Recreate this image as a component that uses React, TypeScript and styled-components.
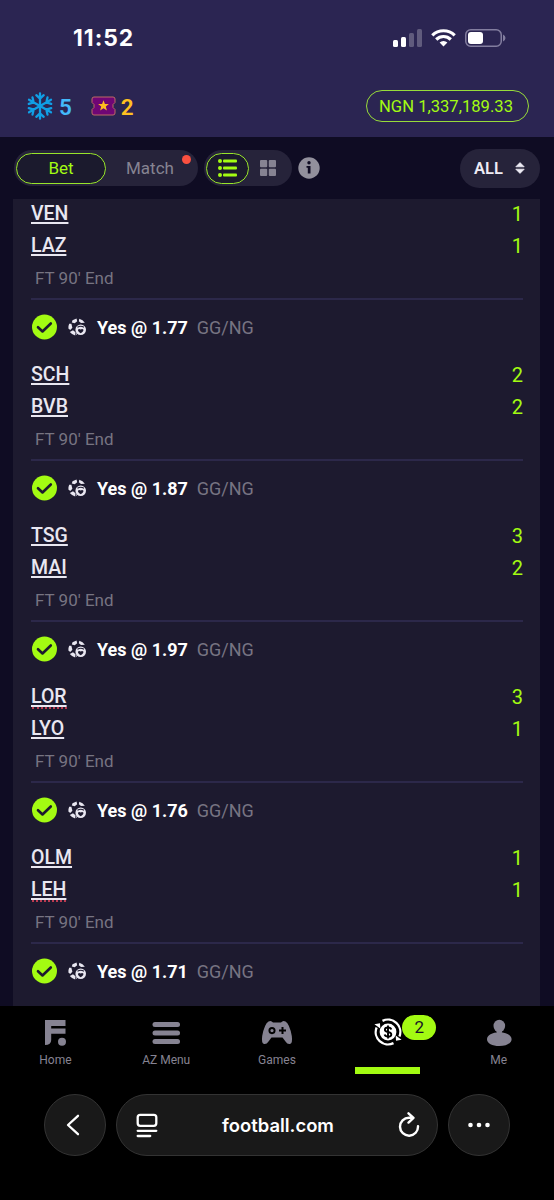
import React from "react";
import styled, { createGlobalStyle } from "styled-components";

const LIME = "#a3fb12";
const GREY = "#868392";

const GlobalStyle = createGlobalStyle`
  * { box-sizing: border-box; }
  body { margin: 0; background: #000; font-family: Roboto, "Liberation Sans", sans-serif; }
  svg { display: block; flex: none; }
`;

const Screen = styled.div`
  width: 554px;
  height: 1200px;
  display: flex;
  flex-direction: column;
  background: #0f0c23;
  overflow: hidden;
`;

const Header = styled.header`
  flex: none;
  height: 137px;
  background: #2b2552;
`;

const StatusBar = styled.div`
  height: 75px;
  display: flex;
  align-items: center;
  justify-content: space-between;
  padding: 0 48px 0 73px;
`;

const Clock = styled.span`
  font: 700 22.8px/26px Inter, sans-serif;
  letter-spacing: 1px;
  color: #fff;
`;

const StatusIcons = styled.div`
  display: flex;
  align-items: center;
  gap: 9px;
`;

const AccountRow = styled.div`
  height: 62px;
  display: flex;
  align-items: center;
  padding: 0 25px 0 26px;
`;

const Count = styled.span<{ $color: string; $gap: number }>`
  font-size: 22.5px;
  line-height: 28px;
  font-weight: 600;
  color: ${(p) => p.$color};
  margin: 1px ${(p) => p.$gap}px 0 5px;
`;

const Balance = styled.div`
  margin-left: auto;
  width: 163px;
  height: 32px;
  display: flex;
  align-items: center;
  justify-content: center;
  padding-right: 3px;
  border: 1.5px solid #98dc3a;
  border-radius: 16px;
  color: ${LIME};
  font-size: 16.6px;
  white-space: nowrap;
`;

const Toolbar = styled.div`
  flex: none;
  height: 62px;
  display: flex;
  align-items: center;
  padding: 0 14px;
`;

const Segment = styled.div<{ $width: number }>`
  width: ${(p) => p.$width}px;
  height: 36px;
  display: flex;
  align-items: center;
  padding-left: 2px;
  border-radius: 18px;
  background: #26233a;
  margin-right: 6px;
  position: relative;
`;

const SegmentItem = styled.div<{ $active?: boolean; $width: number }>`
  width: ${(p) => p.$width}px;
  height: 31px;
  display: flex;
  align-items: center;
  justify-content: center;
  border-radius: 16px;
  border: 1.5px solid ${(p) => (p.$active ? "#98e52a" : "transparent")};
  background: ${(p) => (p.$active ? "#1b1a2d" : "transparent")};
  color: ${(p) => (p.$active ? LIME : GREY)};
  font-size: 17px;
`;

const Dot = styled.i`
  position: absolute;
  right: 7px;
  top: 5px;
  width: 9px;
  height: 9px;
  border-radius: 50%;
  background: #fa5040;
`;

const Filter = styled.div`
  margin-left: auto;
  width: 80px;
  height: 39px;
  display: flex;
  align-items: center;
  gap: 12px;
  padding-left: 14px;
  border-radius: 20px;
  background: #26233a;
  color: #eeecf5;
  font-size: 16.5px;
  font-weight: 600;
`;

const Ticket = styled.main`
  flex: none;
  height: 807px;
  margin: 0 14px 0 13px;
  padding: 0 17px 0 18px;
  background: #1d1a2f;
  overflow: hidden;
`;

const Matches = styled.div`
  margin-top: -1px;
`;

const Match = styled.section`
  height: 161px;
`;

const TeamRow = styled.div`
  height: 32px;
  display: flex;
  align-items: center;
  justify-content: space-between;
  font-size: 20px;
`;

const Team = styled.span<{ $marked?: boolean }>`
  position: relative;
  line-height: 24px;
  color: #e9e7f1;
  font-size: 19.5px;
  font-weight: 500;
  text-decoration: underline;
  text-decoration-thickness: 1.5px;
  text-underline-offset: 2px;
  text-decoration-skip-ink: none;
  &::after {
    content: "";
    display: ${(p) => (p.$marked ? "block" : "none")};
    position: absolute;
    left: 1px;
    right: 0;
    bottom: 0;
    border-bottom: 2px dotted #b93a50;
  }
`;

const Score = styled.span`
  color: ${LIME};
`;

const Period = styled.div`
  height: 38px;
  padding-left: 4px;
  line-height: 33px;
  font-size: 17px;
  color: #777482;
  border-bottom: 2px solid #2c284a;
`;

const Pick = styled.div`
  height: 54px;
  display: flex;
  align-items: center;
`;

const Odds = styled.span`
  margin-left: 11px;
  color: #fff;
  font-size: 18px;
  font-weight: 700;
  white-space: nowrap;
`;

const Market = styled.span`
  margin-left: 9px;
  color: #777482;
  font-size: 18px;
`;

const Nav = styled.nav`
  flex: none;
  height: 70px;
  display: grid;
  grid-template-columns: repeat(5, 1fr);
  background: #000;
`;

const NavItem = styled.div`
  position: relative;
  display: flex;
  flex-direction: column;
  align-items: center;
  padding-top: 12px;
  gap: 5px;
  color: ${GREY};
  font-size: 12px;
  line-height: 18px;
`;

const Badge = styled.span`
  position: absolute;
  left: 70px;
  top: 9px;
  width: 34px;
  height: 25px;
  border-radius: 13px;
  background: ${LIME};
  color: #171528;
  font-size: 17px;
  line-height: 25px;
  text-align: center;
`;

const ActiveBar = styled.i`
  width: 65px;
  height: 7px;
  margin-top: 16px;
  background: ${LIME};
`;

const BrowserBar = styled.footer`
  flex: 1;
  display: flex;
  align-items: flex-start;
  gap: 10px;
  padding: 18px 44px 0;
  background: #000;
`;

const RoundButton = styled.div<{ $shift?: number }>`
  width: 62px;
  height: 62px;
  display: flex;
  align-items: center;
  justify-content: center;
  padding-right: ${(p) => p.$shift ?? 0}px;
  border-radius: 50%;
  border: 1px solid #333;
  background: #191919;
`;

const AddressBar = styled.div`
  flex: 1;
  height: 62px;
  display: flex;
  align-items: center;
  justify-content: space-between;
  padding: 0 17px 0 19px;
  border-radius: 31px;
  border: 1px solid #333;
  background: #191919;
  color: #fff;
  font: 600 18.4px Inter, sans-serif;
`;

const Signal = () => (
  <svg width="29" height="18" viewBox="0 0 29 18" fill="#fff">
    <rect x="0" y="11" width="5" height="7" rx="1.5" />
    <rect x="8" y="8" width="5" height="10" rx="1.5" />
    <rect x="16" y="4" width="5" height="14" rx="1.5" opacity=".25" />
    <rect x="24" y="0" width="5" height="18" rx="1.5" opacity=".25" />
  </svg>
);

const Wifi = () => (
  <svg width="25" height="18" viewBox="0 0 25 18" fill="none" stroke="#fff" strokeWidth="3.2">
    <path d="M1.3 6.3a16 16 0 0 1 22.4 0" />
    <path d="M5.2 10.5a10.4 10.4 0 0 1 14.6 0" />
    <path d="M8.6 13.6a5.6 5.6 0 0 1 7.8 0L12.5 17.6z" fill="#fff" stroke="none" />
  </svg>
);

const Battery = () => (
  <svg width="41" height="18" viewBox="0 0 41 18">
    <rect x=".75" y=".75" width="35.5" height="16.5" rx="5" fill="none" stroke="#837e9f" strokeWidth="1.5" />
    <path d="M38 5.5v7q2.5-1 2.500-3.500t-2.500-3.500" fill="#837e9f" />
    <rect x="3" y="3" width="15" height="12" rx="3" fill="#fff" />
  </svg>
);

const Snowflake = () => (
  <svg width="28" height="28" viewBox="-14 -14 28 28" fill="none" stroke="#109fe6" strokeWidth="2.3" strokeLinecap="round">
    {[0, 60, 120, 180, 240, 300].map((a) => (
      <path key={a} transform={`rotate(${a})`} d="M0 0V-12.700M-3.700-10.800 0-7.300 3.700-10.800" />
    ))}
    <circle r="2.2" fill="#109fe6" stroke="none" />
  </svg>
);

const TicketIcon = () => (
  <svg width="25" height="20" viewBox="0 0 25 20">
    <path
      d="M3 1h19q2 0 2 2v3.500l-2 2v3l2 2V17q0 2-2 2H3q-2 0-2-2v-3.500l2-2v-3l-2-2V3q0-2 2-2z"
      fill="#6f0675"
      stroke="#bd6b64"
      strokeWidth="1"
    />
    <path d="M12.500 4.200l1.400 3.700 4 .2-3.100 2.500 1.100 3.800-3.400-2.200-3.400 2.200 1.100-3.800-3.100-2.500 4-.2z" fill="#ffbd20" />
  </svg>
);

const ListIcon = () => (
  <svg width="19" height="18" viewBox="0 0 19 18" fill={LIME}>
    {[2, 9, 16].map((y) => (
      <g key={y}>
        <circle cx="2" cy={y} r="2" />
        <rect x="5" y={y - 1.5} width="14" height="3" rx="1" />
      </g>
    ))}
  </svg>
);

const GridIcon = () => (
  <svg width="16" height="16" viewBox="0 0 16 16" fill={GREY}>
    <rect width="7.200" height="7.200" rx="1" />
    <rect x="8.800" width="7.200" height="7.200" rx="1" />
    <rect y="8.800" width="7.200" height="7.200" rx="1" />
    <rect x="8.800" y="8.800" width="7.200" height="7.200" rx="1" />
  </svg>
);

const InfoIcon = () => (
  <svg width="22" height="22" viewBox="0 0 22 22">
    <circle cx="11" cy="11" r="10.700" fill="#92909c" />
    <circle cx="11" cy="5.800" r="1.700" fill="#100d24" />
    <path d="M8.500 9h4v7.500H9.800V10.700H8.500z" fill="#100d24" />
  </svg>
);

const SortIcon = () => (
  <svg width="10" height="12" viewBox="0 0 10 12" fill="#eeecf5" stroke="#eeecf5" strokeWidth=".8" strokeLinejoin="round">
    <path d="M5 .6 9.200 4.800H.8zM5 11.400 9.200 7.200H.8z" />
  </svg>
);

const CheckIcon = () => (
  <svg width="27" height="26" viewBox="0 0 27 26">
    <circle cx="13.500" cy="13" r="12.500" fill={LIME} />
    <path d="M7 13.200l4.500 4.300 8.300-8" fill="none" stroke="#1d1a2f" strokeWidth="2.600" strokeLinecap="round" strokeLinejoin="round" />
  </svg>
);

const BallSvg = styled.svg`
  margin-left: 10px;
`;

const BallIcon = () => (
  <BallSvg width="18" height="18" viewBox="0 0 18 18">
    <g fill="#e9e7f1">
      <path d="M4.500 2.200 8.500.6 9.200 3.300 6.700 5.200 3.800 4.600z" />
      <path d="M11.300.7Q15 1.800 16.800 4.800L13 5 10.800 3.200z" />
      <path d="M1.200 5.800 3.400 5.800 4.400 9.800 2.200 12 .4 10.500Q.2 8 1.200 5.800z" />
      <path d="M1.800 14 5 12.300 7.500 14.300 7.200 17.400Q4 16.800 1.800 14z" />
      <circle cx="12.700" cy="11.700" r="5.300" />
    </g>
    <path d="M8.500 17 8.300 15" stroke="#9794a5" />
    <path d="M9.500 9.300q3.200-2.200 6.400 0" fill="none" stroke="#1d1a2f" strokeWidth="1.100" />
    <path d="M12.700 11.600q1.300-1.200 2.600-.2.800 1.400-2.600 3.900-3.400-2.500-2.600-3.900 1.300-1 2.600.2z" fill="#1d1a2f" />
  </BallSvg>
);

const HomeIcon = () => (
  <svg width="28" height="28" viewBox="0 0 28 28" fill={GREY}>
    <path d="M4 2h20.500v6H10.200v2.500h14.300v5.300H10.200V22q0 5-6.200 5z" />
    <circle cx="21" cy="23.800" r="4" />
  </svg>
);

const MenuIcon = () => (
  <svg width="28" height="28" viewBox="0 0 28 28" fill={GREY}>
    {[4, 12.5, 21].map((y) => (
      <rect key={y} x=".5" y={y} width="27.500" height="5" rx="2.500" />
    ))}
  </svg>
);

const GamesIcon = () => (
  <svg width="32" height="28" viewBox="0 0 32 28">
    <path
      d="M7.500 3.600q2.500-1.600 4.500.9h8q2-2.500 4.500-.9 4 2.400 6.300 14.400 1 7-1.800 8-2.500.6-4.500-2.500L21.500 19.500h-11L7.500 23.500q-2 3.100-4.500 2.500-2.800-1-1.800-8 2.300-12 6.300-14.400z"
      fill={GREY}
    />
    <circle cx="11" cy="12.600" r="2.600" fill="none" stroke="#000" strokeWidth="1.900" />
    <path d="M21.500 9.100v7M18 12.600h7" stroke="#000" strokeWidth="2" />
  </svg>
);

const CoinIcon = () => (
  <svg width="28" height="28" viewBox="0 0 28 28">
    <circle cx="14" cy="14" r="8.400" fill="#fff" />
    <path
      d="M8.500 2.900A12.300 12.300 0 0 1 25.400 18.500M19.500 25.100A12.300 12.300 0 0 1 2.600 9.500"
      fill="none"
      stroke="#fff"
      strokeWidth="2.300"
    />
    <path d="M.4 6.200l5.600-.9.300 5.300zM27.600 21.800l-5.600.9-.3-5.300z" fill="#fff" />
    <path
      d="M17.300 11.500q-.6-2-3.300-2-3.100 0-3.100 2.200 0 1.800 3.100 2.300 3.300.6 3.300 2.400 0 2.200-3.300 2.200-2.800 0-3.400-2.100M14 7.600v12.800"
      fill="none"
      stroke="#000"
      strokeWidth="1.900"
    />
  </svg>
);

const MeIcon = () => (
  <svg width="28" height="28" viewBox="0 0 28 28" fill={GREY}>
    <ellipse cx="14.300" cy="8" rx="5.800" ry="6.200" />
    <path d="M11.300 12h6l-.5 3h-5z" />
    <path d="M14.300 14.200c7 0 12.300 3 12.300 7s-5.300 6.800-12.300 6.800S2 25.200 2 21.200s5.300-7 12.300-7z" />
  </svg>
);

const BackIcon = () => (
  <svg width="14" height="22" viewBox="0 0 14 22" fill="none" stroke="#fff" strokeWidth="2.300" strokeLinecap="round" strokeLinejoin="round">
    <path d="M12 1.800 2 11l10 9.200" />
  </svg>
);

const ReaderIcon = () => (
  <svg width="22" height="25" viewBox="0 0 22 25" fill="none" stroke="#fff" strokeWidth="2.300" strokeLinecap="round">
    <rect x="1.700" y="1.800" width="18.600" height="11" rx="2.500" />
    <path d="M1.700 17.800h18.600M1.700 23h12.500" />
  </svg>
);

const ReloadIcon = () => (
  <svg width="22" height="26" viewBox="0 0 22 26" fill="none" stroke="#fff" strokeWidth="2.400" strokeLinecap="round" strokeLinejoin="round">
    <path d="M20 14.200A9 9 0 1 1 11 5.700h4M10.500 1.300l5 4.500-5 4.800" />
  </svg>
);

const MoreIcon = () => (
  <svg width="24" height="6" viewBox="0 0 24 6" fill="#fff">
    <circle cx="3.500" cy="3" r="2.300" />
    <circle cx="12" cy="3" r="2.300" />
    <circle cx="20.500" cy="3" r="2.300" />
  </svg>
);

type Side = { name: string; score: number; marked?: boolean };

const matches: { sides: Side[]; odds: string }[] = [
  { sides: [{ name: "VEN", score: 1 }, { name: "LAZ", score: 1 }], odds: "1.77" },
  { sides: [{ name: "SCH", score: 2 }, { name: "BVB", score: 2 }], odds: "1.87" },
  { sides: [{ name: "TSG", score: 3 }, { name: "MAI", score: 2 }], odds: "1.97" },
  { sides: [{ name: "LOR", score: 3, marked: true }, { name: "LYO", score: 1 }], odds: "1.76" },
  { sides: [{ name: "OLM", score: 1 }, { name: "LEH", score: 1, marked: true }], odds: "1.71" },
];

export default function App() {
  return (
    <Screen>
      <GlobalStyle />
      <Header>
        <StatusBar>
          <Clock>11:52</Clock>
          <StatusIcons>
            <Signal />
            <Wifi />
            <Battery />
          </StatusIcons>
        </StatusBar>
        <AccountRow>
          <Snowflake />
          <Count $color="#43b9fb" $gap={19}>5</Count>
          <TicketIcon />
          <Count $color="#ffc021" $gap={0}>2</Count>
          <Balance>NGN 1,337,189.33</Balance>
        </AccountRow>
      </Header>
      <Toolbar>
        <Segment $width={184}>
          <SegmentItem $active $width={90}>Bet</SegmentItem>
          <SegmentItem $width={88}>Match</SegmentItem>
          <Dot />
        </Segment>
        <Segment $width={88}>
          <SegmentItem $active $width={43}><ListIcon /></SegmentItem>
          <SegmentItem $width={38}><GridIcon /></SegmentItem>
        </Segment>
        <InfoIcon />
        <Filter>
          ALL
          <SortIcon />
        </Filter>
      </Toolbar>
      <Ticket>
        <Matches>
          {matches.map((m) => (
            <Match key={m.odds}>
              {m.sides.map((s) => (
                <TeamRow key={s.name}>
                  <Team $marked={s.marked}>{s.name}</Team>
                  <Score>{s.score}</Score>
                </TeamRow>
              ))}
              <Period>FT 90' End</Period>
              <Pick>
                <CheckIcon />
                <BallIcon />
                <Odds>Yes @ {m.odds}</Odds>
                <Market>GG/NG</Market>
              </Pick>
            </Match>
          ))}
        </Matches>
      </Ticket>
      <Nav>
        <NavItem><HomeIcon />Home</NavItem>
        <NavItem><MenuIcon />AZ Menu</NavItem>
        <NavItem><GamesIcon />Games</NavItem>
        <NavItem>
          <CoinIcon />
          <Badge>2</Badge>
          <ActiveBar />
        </NavItem>
        <NavItem><MeIcon />Me</NavItem>
      </Nav>
      <BrowserBar>
        <RoundButton $shift={4}><BackIcon /></RoundButton>
        <AddressBar>
          <ReaderIcon />
          football.com
          <ReloadIcon />
        </AddressBar>
        <RoundButton><MoreIcon /></RoundButton>
      </BrowserBar>
    </Screen>
  );
}
